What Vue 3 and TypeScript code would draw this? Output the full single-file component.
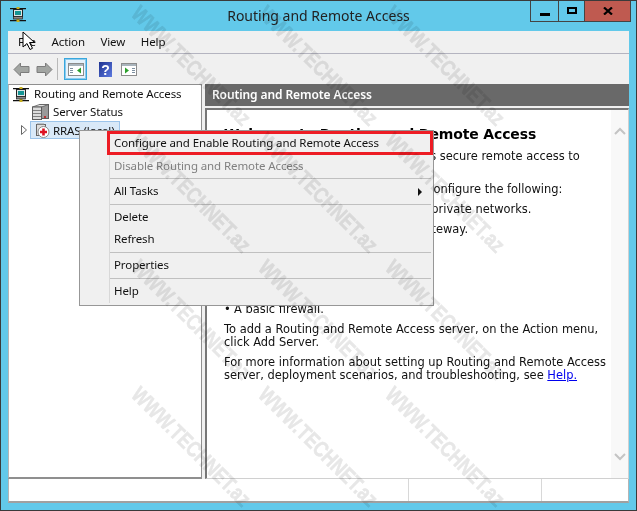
<script setup lang="ts">
const menus = ['File', 'Action', 'View', 'Help']
const marks = Array.from({ length: 12 }, (_, i) => i)
</script>

<template>
  <div class="win">
    <header class="caption">
      <svg class="appicon" width="16" height="15" viewBox="0 0 16 15">
        <path d="M0 1h16v1.200H0zM0 13h16v1.200H0z" fill="#111" />
        <rect x="6.500" y="0" width="3" height="3" fill="#c8b020" />
        <rect x="6.500" y="11" width="3" height="4" fill="#c8b020" />
        <rect x="3.500" y="2.500" width="9" height="7" fill="#dfe6e6" stroke="#222" />
        <rect x="5" y="4" width="6" height="4" fill="#159494" />
        <rect x="3.500" y="9.500" width="9" height="2.500" fill="#888" stroke="#222" stroke-width=".7" />
      </svg>
      <div class="title">Routing and Remote Access</div>
      <div class="ctrls">
        <div class="btn b1"><span class="min"></span></div>
        <div class="btn b2"><span class="max"></span></div>
        <div class="btn b3">
          <svg width="10" height="8" viewBox="0 0 10 8"><path d="M1 .5l8 7M9 .5l-8 7" stroke="#000" stroke-width="2.200" fill="none" /></svg>
        </div>
      </div>
    </header>
    <div class="frame">
      <nav class="menubar">
        <span v-for="m in menus" :key="m" class="mi">{{ m }}</span>
      </nav>
      <div class="toolbar">
        <svg width="17" height="15" viewBox="0 0 17 15"><path d="M1 7.500L7.500 1v3.500h8.500v6H7.500V14z" fill="#a2a5a2" stroke="#7c7c7c" /></svg>
        <svg class="arrow2" width="17" height="15" viewBox="0 0 17 15"><path d="M16 7.500L9.500 1v3.500H1v6h8.500V14z" fill="#a2a5a2" stroke="#7c7c7c" /></svg>
        <span class="sep"></span>
        <span class="active">
          <svg width="16" height="13" viewBox="0 0 16 13">
            <rect x=".5" y=".5" width="15" height="12" fill="#fff" stroke="#8c8c8c" />
            <rect x="1" y="1" width="14" height="2" fill="#a9b4bc" />
            <path d="M2 5h3v1H2zM2 7h3v1H2zM2 9h3v1H2z" fill="#7d8fa0" />
            <path d="M13 4.500v6l-4-3z" fill="#2ca02c" />
          </svg>
        </span>
        <svg class="help" width="13" height="15" viewBox="0 0 13 15">
          <defs>
            <linearGradient id="hg" x1="0" y1="0" x2="1" y2="1">
              <stop offset="0" stop-color="#1e3290" />
              <stop offset="1" stop-color="#5d7ae0" />
            </linearGradient>
          </defs>
          <rect width="13" height="15" fill="url(#hg)" />
          <text x="6.500" y="12.500" font-family="Liberation Sans, sans-serif" font-size="14" font-weight="700" fill="#fff" text-anchor="middle">?</text>
        </svg>
        <svg class="last" width="16" height="13" viewBox="0 0 16 13">
          <rect x=".5" y=".5" width="15" height="12" fill="#fff" stroke="#8c8c8c" />
          <rect x="1" y="1" width="14" height="2" fill="#a9b4bc" />
          <path d="M11 5h3v1h-3zM11 7h3v1h-3zM11 9h3v1h-3z" fill="#7d8fa0" />
          <path d="M4 4.500v6l4-3z" fill="#2ca02c" />
        </svg>
      </div>
      <div class="panes">
        <aside class="tree">
          <div class="node n0">
            <svg width="16" height="15" viewBox="0 0 16 15">
              <path d="M0 1h16v1.200H0zM0 13h16v1.200H0z" fill="#111" />
              <rect x="6.500" y="0" width="3" height="3" fill="#c8b020" />
              <rect x="6.500" y="11" width="3" height="4" fill="#c8b020" />
              <rect x="3.500" y="2.500" width="9" height="7" fill="#dfe6e6" stroke="#222" />
              <rect x="5" y="4" width="6" height="4" fill="#159494" />
              <rect x="3.500" y="9.500" width="9" height="2.500" fill="#888" stroke="#222" stroke-width=".7" />
            </svg>
            <span>Routing and Remote Access</span>
          </div>
          <div class="node n1">
            <svg width="17" height="16" viewBox="0 0 17 16">
              <rect x="7.500" y=".5" width="9" height="14" fill="#9a9a9a" stroke="#5c5c5c" />
              <path d="M.5 3L7.500.5h9L9.500 3z" fill="#e2e2e2" stroke="#5c5c5c" stroke-width=".8" />
              <rect x=".5" y="3" width="9" height="12.500" fill="#dcdcdc" stroke="#5c5c5c" />
              <path d="M1 6.500h8M1 9.500h8M1 12.500h8" stroke="#808080" />
              <rect x="12" y="12" width="2" height="2" fill="#b33" />
            </svg>
            <span>Server Status</span>
          </div>
          <div class="node n2">
            <svg class="twist" width="6" height="10" viewBox="0 0 6 10"><path d="M.5.5v9l5-4.500z" fill="#fff" stroke="#666" /></svg>
            <div class="sel">
              <svg width="15" height="15" viewBox="0 0 15 15">
                <rect x="1.500" y="1.500" width="9" height="11" fill="#ddd" stroke="#666" />
                <path d="M2 .5h7v1H2z" fill="#999" />
                <circle cx="8.500" cy="9" r="5.500" fill="#fff" stroke="#8a8a8a" />
                <path d="M7.200 5.500h2.600v2.200H12v2.600H9.800v2.200H7.200v-2.200H5V7.700h2.200z" fill="#dd1122" />
              </svg>
              <span>RRAS (local)</span>
            </div>
          </div>
        </aside>
        <main class="detail">
          <div class="dhead">Routing and Remote Access</div>
          <div class="dbody">
            <div class="doc">
              <h1>Welcome to Routing and Remote Access</h1>
              <p>Routing and Remote Access provides secure remote access to private networks.</p>
              <p>Use Routing and Remote Access to configure the following:</p>
              <ul>
                <li>A secure connection between two private networks.</li>
                <li>A Virtual Private Network (VPN) gateway.</li>
                <li>A dial-up remote access server.</li>
                <li>Network address translation (NAT).</li>
                <li>LAN routing.</li>
                <li>A basic firewall.</li>
              </ul>
              <p>To add a Routing and Remote Access server, on the Action menu, click Add Server.</p>
              <p>For more information about setting up Routing and Remote Access server, deployment scenarios, and troubleshooting, see <a>Help.</a></p>
            </div>
            <div class="scroll">
              <svg width="12" height="8" viewBox="0 0 12 8"><path d="M1 7l5-5 5 5" stroke="#c4c4c4" stroke-width="2" fill="none" /></svg>
              <svg width="12" height="8" viewBox="0 0 12 8"><path d="M1 1l5 5 5-5" stroke="#c4c4c4" stroke-width="2" fill="none" /></svg>
            </div>
          </div>
        </main>
      </div>
      <footer class="status">
        <span class="s1"></span><span class="s2"></span><span class="s3"></span>
      </footer>
    </div>

    <div class="ctx">
      <div class="ci">Configure and Enable Routing and Remote Access</div>
      <div class="ci dis">Disable Routing and Remote Access</div>
      <div class="rule"></div>
      <div class="ci arrowed">All Tasks <i></i></div>
      <div class="rule"></div>
      <div class="ci">Delete</div>
      <div class="ci">Refresh</div>
      <div class="rule"></div>
      <div class="ci">Properties</div>
      <div class="rule"></div>
      <div class="ci">Help</div>
    </div>
    <div class="redbox"></div>

    <div class="marks">
      <div v-for="i in marks" :key="i" class="cell"><span>WWW.TECHNET.az</span></div>
    </div>

    <svg class="cursor" width="14" height="20" viewBox="0 0 14 20">
      <path d="M1 1v15l4-3.500 3 6 2.500-1.200-3-5.800h5z" fill="#fff" stroke="#000" />
    </svg>
  </div>
</template>

<style>
html, body { margin: 0; background: #62c9ea; }
</style>

<style scoped>
.win {
  position: relative;
  width: 637px;
  height: 511px;
  box-sizing: border-box;
  background: #62c9ea;
  border: 1px solid #3a3a3a;
  overflow: hidden;
  font-family: "Noto Sans", "Open Sans", sans-serif;
  font-size: 11.5px;
  letter-spacing: -0.1px;
  color: #111;
  display: flex;
  flex-direction: column;
}
.caption {
  height: 29px;
  position: relative;
  display: flex;
  flex: none;
}
.appicon { position: absolute; left: 9px; top: 6px; }
.title {
  width: 100%;
  text-align: center;
  font-size: 14px;
  letter-spacing: 0;
  line-height: 29px;
  color: #222;
}
.ctrls { position: absolute; right: 5px; top: -1px; display: flex; height: 22px; border: 1px solid #444; box-sizing: border-box; }
.btn { display: flex; align-items: center; justify-content: center; height: 20px; }
.b1 { width: 27px; border-right: 1px solid #444; }
.b2 { width: 25px; border-right: 1px solid #444; }
.b3 { width: 45px; background: #bf5a50; }
.min { width: 10px; height: 3px; background: #000; margin-top: 6px; }
.max { width: 6px; height: 3px; border: 2px solid #000; margin-top: -2px; }
.frame {
  margin: 1px 7px 7px 7px;
  flex: 1;
  background: #f0f0f0;
  display: flex;
  flex-direction: column;
  min-height: 0;
}
.menubar {
  display: flex;
  align-items: center;
  padding: 0 0 2px 10px;
  height: 20px;
  gap: 15.5px;
  border-bottom: 1px solid #b4b4c0;
  flex: none;
}
.toolbar {
  height: 30px;
  flex: none;
  display: flex;
  align-items: center;
  padding-left: 5px;
}
.arrow2 { margin-left: 6px; }
.sep { width: 1px; height: 22px; background: #b9b9b9; margin: 0 6px 0 4px; }
.active {
  width: 23px;
  height: 22px;
  box-sizing: border-box;
  border: 1px solid #39a7dd;
  outline: 1px solid #8ccbee;
  outline-offset: -2px;
  background: #e6f2fb;
  display: flex;
  align-items: center;
  justify-content: center;
}
.help { margin-left: 12px; }
.last { margin-left: 9px; }
.panes {
  flex: 1;
  min-height: 0;
  display: flex;
  gap: 3px;
}
.tree {
  width: 194px;
  background: #fff;
  border: 1px solid #8f8f8f;
  border-left-color: #b5b5b5;
  border-width: 1px 1px 2px 1px;
  box-sizing: border-box;
}
.node { display: flex; align-items: center; height: 18px; }
.n0 { padding-left: 4px; gap: 5px; }
.n1 { padding-left: 23px; gap: 4px; }
.n2 { padding-left: 12px; }
.n0 > span, .n1 > span { margin-top: -2px; }
.twist { margin-right: 3px; }
.sel {
  display: flex;
  align-items: center;
  gap: 3px;
  height: 18px;
  width: 90px;
  background: #d9e9f8;
  border: 1px solid #9cc4ea;
  padding-left: 4px;
  box-sizing: border-box;
}
.detail {
  flex: 1;
  display: flex;
  flex-direction: column;
  min-width: 0;
}
.dhead {
  height: 22px;
  background: #696969;
  color: #fff;
  line-height: 22px;
  padding-left: 7px;
  font-size: 12px;
  font-weight: 600;
  letter-spacing: -0.1px;
  flex: none;
}
.dbody {
  margin-top: 2px;
  flex: 1;
  min-height: 0;
  display: flex;
  background: #fff;
  border: 1px solid #d0d0d0;
  border-top: 2px solid #777;
  border-left: 2px solid #777;
}
.doc {
  flex: 1;
  padding: 15px 0 0 17px;
  font-family: "DejaVu Sans", sans-serif;
  font-size: 11.45px;
  letter-spacing: 0;
  line-height: 13px;
  color: #111;
  min-width: 0;
}
.doc h1 { margin: 0 0 7px; font-size: 14px; letter-spacing: -0.15px; line-height: 18px; font-weight: 700; color: #000; }
.doc p { margin: 0 0 7px; }
.doc ul { margin: 0 0 7px; padding: 0 0 0 10px; list-style: none; }
.doc li { margin-bottom: 7px; position: relative; }
.doc li::before { content: "•"; position: absolute; left: -10px; top: 0; }
.doc li:last-child { margin-bottom: 0; }
.doc a { color: #0000ee; text-decoration: underline; }
.scroll {
  width: 17px;
  background: #f8f8f8;
  display: flex;
  flex-direction: column;
  justify-content: space-between;
  align-items: center;
  padding: 17px 0;
  box-sizing: border-box;
  flex: none;
}
.status {
  height: 24px;
  flex: none;
  background: #fff;
  border-bottom: 2px solid #a0a0a0;
  border-left: 1px solid #b5b5b5;
  border-right: 1px solid #b5b5b5;
  display: flex;
  box-sizing: border-box;
}
.s1 { width: 399px; border-right: 1px solid #d8d8d8; }
.s2 { width: 132px; border-right: 1px solid #d8d8d8; }
.ctx {
  position: absolute;
  left: 78px;
  top: 129px;
  width: 355px;
  height: 176px;
  box-sizing: border-box;
  background: #f0f0f0;
  border: 1px solid #979797;
  padding: 2px;
}
.ctx::before {
  content: "";
  position: absolute;
  left: 29px;
  top: 2px;
  bottom: 2px;
  width: 1px;
  background: #d8d8d8;
}
.ci {
  height: 22px;
  line-height: 20px;
  padding-left: 32px;
  position: relative;
  color: #111;
}
.ci.dis { color: #808080; line-height: 22px; }
.arrowed i {
  position: absolute;
  right: 9px;
  top: 7px;
  border-left: 4px solid #111;
  border-top: 4px solid transparent;
  border-bottom: 4px solid transparent;
}
.rule { height: 1px; background: #c0c0c0; margin: 1px 0 2px 28px; }
.redbox {
  position: absolute;
  left: 106px;
  top: 130px;
  width: 326px;
  height: 24px;
  box-sizing: border-box;
  border: 3px solid #ed1c24;
}
.marks {
  position: absolute;
  left: 126px;
  top: 1px;
  display: grid;
  grid-template-columns: repeat(3, 127px);
  grid-auto-rows: 127px;
  pointer-events: none;
  mix-blend-mode: multiply;
}
.cell { display: flex; align-items: center; justify-content: center; min-width: 0; }
.cell span {
  transform: rotate(45deg) scaleX(0.8);
  white-space: nowrap;
  font-family: "Liberation Sans", sans-serif;
  font-weight: 700;
  font-size: 22px;
  letter-spacing: 0;
  color: #e7e7e7;
  -webkit-text-stroke: 0.5px #e7e7e7;
}
.cursor { position: absolute; left: 21px; top: 30px; }
</style>
